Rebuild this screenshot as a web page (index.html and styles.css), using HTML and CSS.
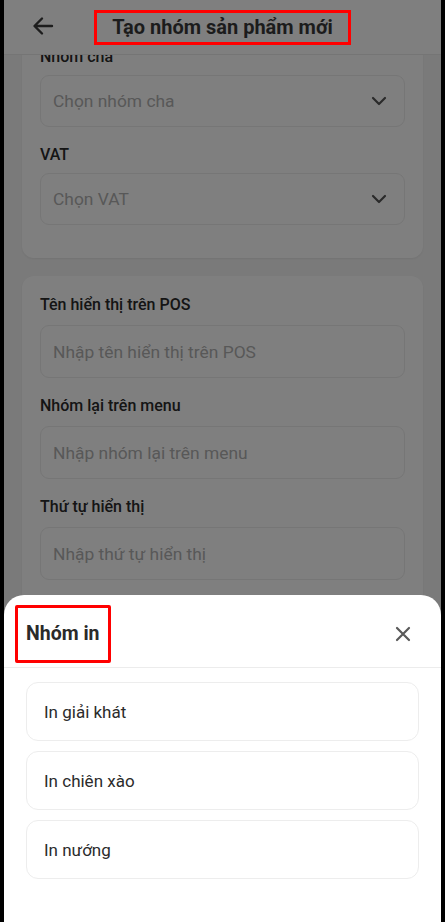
FILE: index.html
```html
<!DOCTYPE html>
<html lang="vi">
<head>
<meta charset="utf-8">
<title>Tạo nhóm sản phẩm mới</title>
<link rel="stylesheet" href="styles.css">
</head>
<body>
<div class="frame">
  <header class="topbar">
    <button class="back" aria-label="Quay lại">
      <svg width="22" height="20" viewBox="0 0 22 20"><path d="M20 10H3M10 2.5L2.5 10L10 17.5" fill="none" stroke="#3a3a3a" stroke-width="2.4" stroke-linecap="round" stroke-linejoin="round"/></svg>
    </button>
    <h1 class="title">Tạo nhóm sản phẩm mới</h1>
    <span></span>
  </header>

  <div class="scroller">
    <div class="scroll-inner">
      <section class="card card--tight">
        <label class="label">Nhóm cha</label>
        <div class="field select">
          <span class="ph">Chọn nhóm cha</span>
          <svg class="chev" width="16" height="10" viewBox="0 0 16 10"><path d="M2 2l6 6 6-6" fill="none" stroke="#555" stroke-width="2.2" stroke-linecap="round" stroke-linejoin="round"/></svg>
        </div>
        <label class="label">VAT</label>
        <div class="field select">
          <span class="ph">Chọn VAT</span>
          <svg class="chev" width="16" height="10" viewBox="0 0 16 10"><path d="M2 2l6 6 6-6" fill="none" stroke="#555" stroke-width="2.2" stroke-linecap="round" stroke-linejoin="round"/></svg>
        </div>
      </section>

      <section class="card">
        <label class="label">Tên hiển thị trên POS</label>
        <div class="field"><span class="ph">Nhập tên hiển thị trên POS</span></div>
        <label class="label">Nhóm lại trên menu</label>
        <div class="field"><span class="ph">Nhập nhóm lại trên menu</span></div>
        <label class="label">Thứ tự hiển thị</label>
        <div class="field"><span class="ph">Nhập thứ tự hiển thị</span></div>
      </section>
    </div>
  </div>

  <div class="overlay"></div>

  <div class="sheet">
    <div class="sheet-head">
      <h2 class="sheet-title">Nhóm in</h2>
      <button class="close" aria-label="Đóng">
        <svg width="16" height="16" viewBox="0 0 16 16"><path d="M2 2l12 12M14 2L2 14" fill="none" stroke="#5a5a5a" stroke-width="2.2" stroke-linecap="round"/></svg>
      </button>
    </div>
    <ul class="options">
      <li class="option">In giải khát</li>
      <li class="option">In chiên xào</li>
      <li class="option">In nướng</li>
    </ul>
  </div>
</div>
</body>
</html>
```

FILE: styles.css
```css
* { box-sizing: border-box; }

html, body {
  margin: 0;
  padding: 0;
  background: #000;
  font-family: Roboto, "Noto Sans", "Liberation Sans", sans-serif;
}

.frame {
  position: relative;
  width: 437px;
  height: 922px;
  margin-left: 4px;
  background: #f4f4f4;
  overflow: hidden;
}

.topbar {
  height: 55px;
  background: #fff;
  border-bottom: 1px solid #ebebeb;
  display: grid;
  grid-template-columns: 1fr auto 1fr;
  align-items: center;
}

.back {
  justify-self: start;
  margin-left: 28px;
  margin-top: -2px;
  padding: 0;
  border: 0;
  background: none;
  display: flex;
}

.title {
  position: relative;
  z-index: 4;
  margin: 0;
  height: 35px;
  padding: 0 15px;
  border: 3px solid #ff0000;
  font-size: 20px;
  font-weight: 700;
  line-height: 29px;
  color: #1c1c1c;
}

.scroller {
  height: 867px;
  overflow: hidden;
}

.scroll-inner {
  margin-top: -29px;
  padding: 0 18px;
  display: flex;
  flex-direction: column;
  gap: 18px;
}

.card {
  background: #fff;
  border-radius: 12px;
  padding: 19px 18px 34px;
  display: flex;
  flex-direction: column;
  box-shadow: 0 1px 2px rgba(0,0,0,0.06);
}

.label {
  font-size: 16px;
  font-weight: 500;
  line-height: 20px;
  color: #2a2a2a;
  margin-bottom: 10px;
}

.field {
  height: 53px;
  border: 1px solid #ececec;
  border-radius: 9px;
  background: #fff;
  padding: 0 17px 0 12px;
  display: flex;
  align-items: center;
  justify-content: space-between;
  margin-bottom: 18px;
}

.field:last-child { margin-bottom: 0; }

.card--tight { padding-bottom: 33px; }
.card--tight .label { margin-bottom: 8px; }
.card--tight .field { height: 52px; }
.card--tight .label:first-child { margin-top: 2px; }

.ph {
  font-size: 17.4px;
  color: #b0b0b0;
}

.overlay {
  position: absolute;
  inset: 0;
  background: rgba(0,0,0,0.5);
  z-index: 3;
}

.sheet {
  position: absolute;
  left: 0;
  right: 0;
  bottom: 0;
  height: 327px;
  background: #fff;
  border-radius: 20px 20px 0 0;
  z-index: 5;
}

.sheet-head {
  display: flex;
  align-items: center;
  justify-content: space-between;
  padding: 10px 30px 4px 11px;
  border-bottom: 1px solid #ececec;
}

.sheet-title {
  margin: 0;
  height: 58px;
  padding: 0 8px 0 8px;
  border: 3px solid #ff0000;
  border-radius: 2px;
  font-size: 19.5px;
  font-weight: 700;
  line-height: 52px;
  color: #2a2a2a;
}

.close {
  padding: 0;
  border: 0;
  background: none;
  display: flex;
}

.options {
  list-style: none;
  margin: 0;
  padding: 14px 22px 0;
  display: flex;
  flex-direction: column;
  gap: 10px;
}

.option {
  height: 59px;
  border: 1px solid #ededed;
  border-radius: 12px;
  padding-left: 17px;
  display: flex;
  align-items: center;
  font-size: 17px;
  font-weight: 400;
  color: #2b2b2b;
}
```
